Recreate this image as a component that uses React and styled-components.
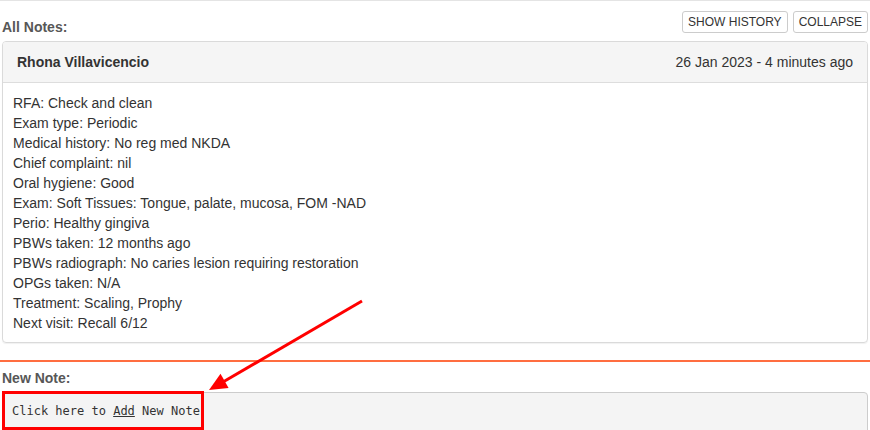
import React from "react";
import styled, { createGlobalStyle } from "styled-components";

const GlobalStyle = createGlobalStyle`
  html, body {
    margin: 0;
    padding: 0;
    overflow: hidden;
    background: #ffffff;
  }
  body {
    font-family: "Liberation Sans", Arial, sans-serif;
    color: #333333;
  }
  * { box-sizing: border-box; }
`;

const Page = styled.div`
  position: relative;
  width: 870px;
  height: 430px;
  overflow: hidden;
  border-top: 1px solid #e4e4e4;
`;

const Section = styled.div`
  padding: 0 2px;
`;

const Toolbar = styled.div`
  display: flex;
  justify-content: space-between;
  align-items: flex-start;
  height: 40px;
`;

const SectionLabel = styled.div`
  font-size: 14px;
  font-weight: bold;
  line-height: 16px;
  color: #575757;
  margin: ${(p) => p.$margin || "0"};
`;

const ButtonGroup = styled.div`
  display: flex;
  gap: 5px;
  margin-top: 10px;
`;

const Button = styled.button`
  height: 22px;
  padding: 0 5px;
  font-family: "Liberation Sans", Arial, sans-serif;
  font-size: 12px;
  line-height: 20px;
  color: #333333;
  background: #ffffff;
  border: 1px solid #cccccc;
  border-radius: 3px;
  text-transform: uppercase;
  cursor: pointer;
`;

const NoteCard = styled.div`
  border: 1px solid #dadada;
  border-radius: 4px;
  box-shadow: 0 1px 1px rgba(0, 0, 0, 0.06);
  overflow: hidden;
`;

const NoteHeader = styled.div`
  display: flex;
  justify-content: space-between;
  align-items: center;
  padding: 10px 14px;
  background: #f5f5f5;
  border-bottom: 1px solid #dddddd;
  font-size: 14px;
  line-height: 20px;
  color: #333333;
`;

const Author = styled.span`
  font-weight: bold;
`;

const NoteBody = styled.div`
  padding: 10px 10px 9px 10px;
  font-size: 14px;
  line-height: 20px;
  color: #333333;
`;

const NoteLine = styled.div``;

const Divider = styled.div`
  margin-top: 17px;
  height: 2px;
  background: #ff6d40;
`;

const NoteInput = styled.div`
  height: 60px;
  padding: 9px 9px;
  background: #f4f4f4;
  border: 1px solid #cccccc;
  border-radius: 0 4px 0 0;
  font-family: "DejaVu Sans Mono", "Liberation Mono", monospace;
  font-size: 12px;
  line-height: 18px;
  color: #333333;
  cursor: text;
`;

const AddLink = styled.span`
  text-decoration: underline;
`;

const Annotation = styled.svg`
  position: absolute;
  left: 0;
  top: 0;
  pointer-events: none;
`;

const lines = [
  "RFA: Check and clean",
  "Exam type: Periodic",
  "Medical history: No reg med NKDA",
  "Chief complaint: nil",
  "Oral hygiene: Good",
  "Exam: Soft Tissues: Tongue, palate, mucosa, FOM -NAD",
  "Perio: Healthy gingiva",
  "PBWs taken: 12 months ago",
  "PBWs radiograph: No caries lesion requiring restoration",
  "OPGs taken: N/A",
  "Treatment: Scaling, Prophy",
  "Next visit: Recall 6/12",
];

export default function App() {
  return (
    <>
      <GlobalStyle />
      <Page>
        <Section>
          <Toolbar>
            <SectionLabel $margin="18px 0 0 0">All Notes:</SectionLabel>
            <ButtonGroup>
              <Button>Show History</Button>
              <Button>Collapse</Button>
            </ButtonGroup>
          </Toolbar>
          <NoteCard>
            <NoteHeader>
              <Author>Rhona Villavicencio</Author>
              <span>26 Jan 2023 - 4 minutes ago</span>
            </NoteHeader>
            <NoteBody>
              {lines.map((l) => (
                <NoteLine key={l}>{l}</NoteLine>
              ))}
            </NoteBody>
          </NoteCard>
        </Section>
        <Divider />
        <Section>
          <SectionLabel $margin="8px 0 6px 0">New Note:</SectionLabel>
          <NoteInput>
            Click here to <AddLink>Add</AddLink> New Note
          </NoteInput>
        </Section>
        <Annotation width="870" height="430" viewBox="0 0 870 430">
          <line
            x1="362"
            y1="300"
            x2="223"
            y2="381"
            stroke="#ff0000"
            strokeWidth="3"
          />
          <polygon points="209,389 220.5,372.8 228.6,386.9" fill="#ff0000" />
          <rect
            x="3.5"
            y="391.5"
            width="199"
            height="36"
            fill="none"
            stroke="#ff0000"
            strokeWidth="3"
          />
        </Annotation>
      </Page>
    </>
  );
}
